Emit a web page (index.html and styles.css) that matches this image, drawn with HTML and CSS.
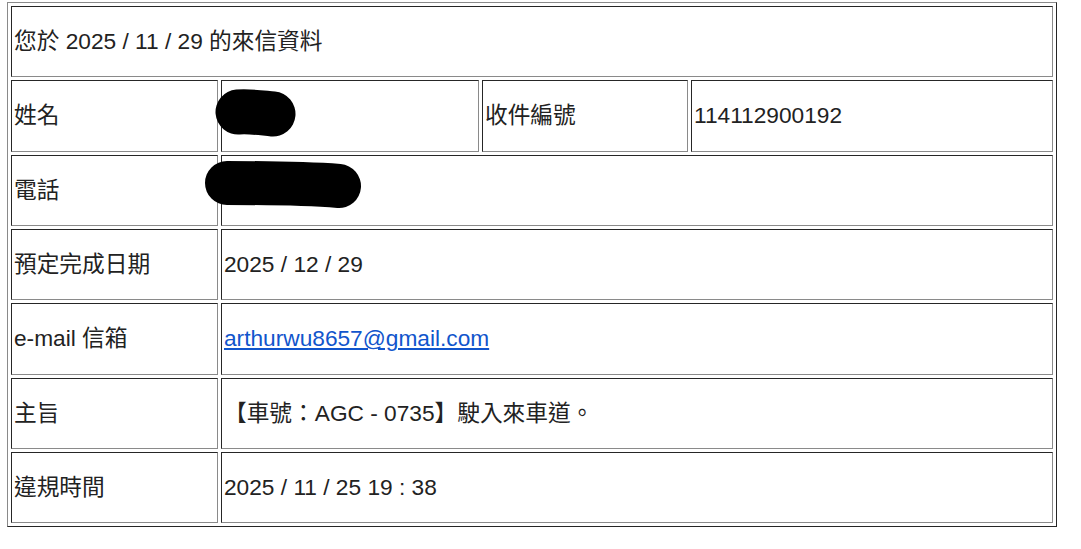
FILE: index.html
```html
<!DOCTYPE html>
<html lang="zh-Hant">
<head>
<meta charset="utf-8">
<title>來信資料</title>
<link rel="stylesheet" href="styles.css">
</head>
<body>
<table class="info">
  <colgroup>
    <col class="c1"><col class="c2"><col class="c3"><col class="c4">
  </colgroup>
  <tr><td colspan="4">您於 2025 / 11 / 29 的來信資料</td></tr>
  <tr><td>姓名</td><td></td><td>收件編號</td><td>114112900192</td></tr>
  <tr><td>電話</td><td colspan="3"></td></tr>
  <tr><td>預定完成日期</td><td colspan="3">2025 / 12 / 29</td></tr>
  <tr><td>e-mail 信箱</td><td colspan="3"><a class="mail" href="#">arthurwu8657@gmail.com</a></td></tr>
  <tr><td>主旨</td><td colspan="3">【車號：AGC - 0735】駛入來車道。</td></tr>
  <tr><td>違規時間</td><td colspan="3">2025 / 11 / 25 19 : 38</td></tr>
</table>
<svg class="redact" width="1081" height="549" viewBox="0 0 1081 549" aria-hidden="true">
  <path d="M238 112 C250 111 262 113 273 114" stroke="#000" stroke-width="45" stroke-linecap="round" fill="none"/>
  <path d="M227 183 C260 183 300 183 339 186" stroke="#000" stroke-width="44" stroke-linecap="round" fill="none"/>
</svg>
</body>
</html>
```

FILE: styles.css
```css
html, body {
  margin: 0;
  padding: 0;
  background: #fff;
}

body {
  position: relative;
  width: 1081px;
  height: 549px;
  overflow: hidden;
  font-family: "Liberation Sans", Arial, "Noto Sans CJK TC", sans-serif;
  font-size: 22.7px;
  line-height: 1.2;
  color: #222;
}

.info {
  margin: 2px 0 0 7px;
  width: 1050px;
  table-layout: fixed;
  border-collapse: separate;
  border-spacing: 3px;
  border: 1px solid;
  border-color: #8a8a8a #262626 #262626 #8a8a8a;
}

.c1 { width: 207px; }
.c2 { width: 258px; }
.c3 { width: 206px; }
.c4 { width: 362px; }

.info tr {
  height: 71.33px;
}

.info td {
  border: 1px solid;
  border-color: #262626 #8a8a8a #8a8a8a #262626;
  padding: 0 2px;
  vertical-align: middle;
  white-space: nowrap;
}

.mail {
  color: #1155cc;
  text-decoration: underline;
}

.redact {
  position: absolute;
  top: 0;
  left: 0;
  pointer-events: none;
}
```
